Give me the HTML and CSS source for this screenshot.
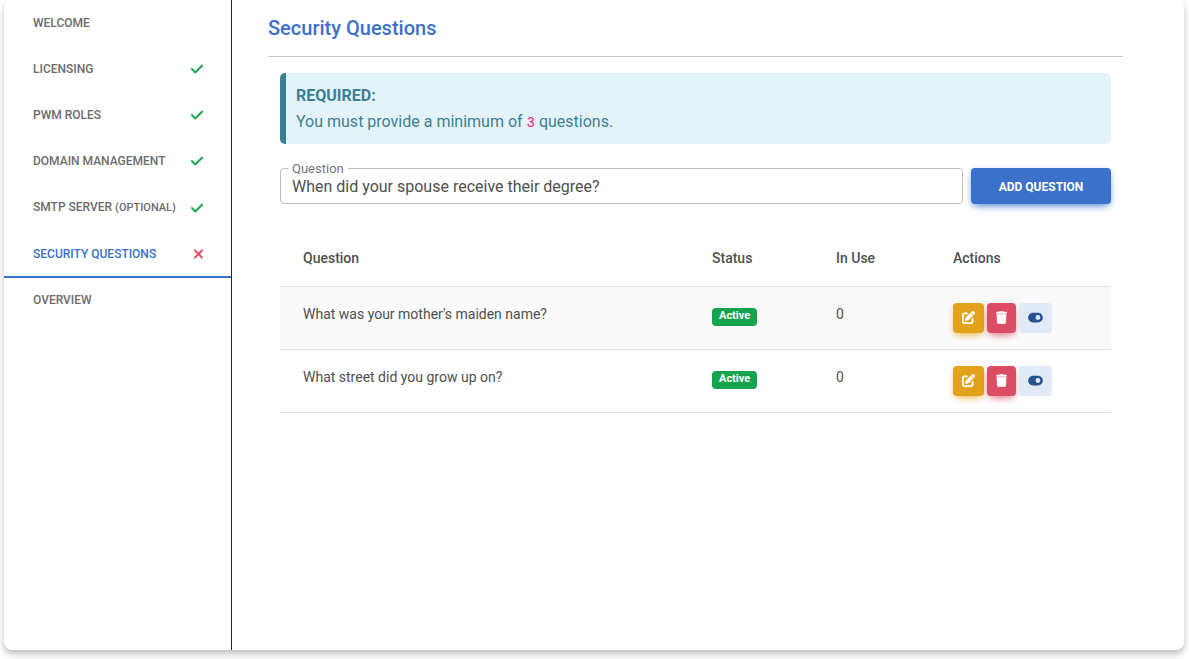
FILE: index.html
```html
<!DOCTYPE html>
<html lang="en">
  <head>
    <meta charset="utf-8">
    <meta name="viewport" content="width=device-width, initial-scale=1">
    <title>Security Questions</title>
    <link rel="stylesheet" href="styles.css">
  </head>
  <body>
    <svg width="0" height="0" class="sprite" aria-hidden="true">
      <symbol id="check" viewBox="0 0 448 512">
        <path d="M438.6 105.4c12.5 12.5 12.5 32.8 0 45.3l-256 256c-12.5 12.5-32.8 12.5-45.3 0l-128-128c-12.5-12.5-12.5-32.8 0-45.3s32.8-12.5 45.3 0L160 338.7 393.4 105.4c12.5-12.5 32.8-12.5 45.3 0z"/>
      </symbol>
      <symbol id="times" viewBox="0 0 320 512">
        <path d="M310.6 361.4c12.5 12.5 12.5 32.8 0 45.3s-32.8 12.5-45.3 0L160 301.3 54.6 406.6c-12.5 12.5-32.8 12.5-45.3 0s-12.5-32.8 0-45.3L114.7 256 9.4 150.6c-12.5-12.5-12.5-32.8 0-45.3s32.8-12.5 45.3 0L160 210.7 265.4 105.4c12.5-12.5 32.8-12.5 45.3 0s12.5 32.8 0 45.3L205.3 256z"/>
      </symbol>
      <symbol id="edit" viewBox="0 0 512 512">
        <path d="M471.6 21.7c-21.9-21.9-57.3-21.9-79.2 0L362.3 51.7l97.9 97.9 30.1-30.1c21.9-21.9 21.9-57.3 0-79.2L471.6 21.7zm-299.2 220c-6.1 6.1-10.8 13.6-13.5 21.9l-29.6 88.8c-2.9 8.6-.6 18.1 5.8 24.6s15.9 8.7 24.6 5.8l88.8-29.6c8.2-2.7 15.7-7.4 21.9-13.5L437.7 172.3 339.7 74.3 172.4 241.7zM96 64C43 64 0 107 0 160V416c0 53 43 96 96 96H352c53 0 96-43 96-96V320c0-17.7-14.3-32-32-32s-32 14.3-32 32v96c0 17.7-14.3 32-32 32H96c-17.7 0-32-14.3-32-32V160c0-17.7 14.3-32 32-32h96c17.7 0 32-14.3 32-32s-14.3-32-32-32H96z"/>
      </symbol>
      <symbol id="trash" viewBox="0 0 448 512">
        <path d="M135.2 17.7L128 32H32C14.3 32 0 46.3 0 64S14.3 96 32 96H416c17.7 0 32-14.3 32-32s-14.3-32-32-32H320l-7.2-14.3C307.4 6.8 296.3 0 284.2 0H163.8c-12.1 0-23.2 6.8-28.6 17.7zM416 128H32L53.2 467c1.6 25.3 22.6 45 47.9 45H346.9c25.3 0 46.3-19.7 47.9-45L416 128z"/>
      </symbol>
      <symbol id="toggle-on" viewBox="0 0 576 512">
        <path d="M192 64C86 64 0 150 0 256S86 448 192 448H384c106 0 192-86 192-192s-86-192-192-192H192zm192 96a96 96 0 1 1 0 192 96 96 0 1 1 0-192z"/>
      </symbol>
    </svg>

    <div class="card">
      <nav class="steps">
        <a class="step" href="#welcome">Welcome</a>
        <a class="step" href="#licensing">Licensing <svg class="icon-check"><use href="#check"/></svg></a>
        <a class="step" href="#roles">PWM Roles <svg class="icon-check"><use href="#check"/></svg></a>
        <a class="step" href="#domain">Domain Management <svg class="icon-check"><use href="#check"/></svg></a>
        <a class="step" href="#smtp"><span>SMTP Server <small>(Optional)</small></span> <svg class="icon-check"><use href="#check"/></svg></a>
        <a class="step active" href="#questions">Security Questions <svg class="icon-times"><use href="#times"/></svg></a>
        <a class="step" href="#overview">Overview</a>
      </nav>

      <main class="content">
        <h1>Security Questions</h1>
        <div class="panel">
          <div class="note">
            <strong>REQUIRED:</strong>
            <p>You must provide a minimum of <code>3</code> questions.</p>
          </div>

          <form class="add-form">
            <div class="field">
              <label for="question">Question</label>
              <input type="text" id="question" value="When did your spouse receive their degree?">
            </div>
            <button type="button" class="btn-add">Add Question</button>
          </form>

          <table>
            <colgroup>
              <col>
              <col class="col-status">
              <col class="col-use">
              <col class="col-actions">
            </colgroup>
            <thead>
              <tr>
                <th>Question</th>
                <th>Status</th>
                <th>In Use</th>
                <th>Actions</th>
              </tr>
            </thead>
            <tbody>
              <tr>
                <td>What was your mother's maiden name?</td>
                <td><span class="badge">Active</span></td>
                <td>0</td>
                <td>
                  <div class="actions">
                    <button type="button" class="btn btn-edit" aria-label="Edit"><svg class="icon-edit"><use href="#edit"/></svg></button>
                    <button type="button" class="btn btn-delete" aria-label="Delete"><svg class="icon-trash"><use href="#trash"/></svg></button>
                    <button type="button" class="btn btn-toggle" aria-label="Toggle"><svg class="icon-toggle"><use href="#toggle-on"/></svg></button>
                  </div>
                </td>
              </tr>
              <tr>
                <td>What street did you grow up on?</td>
                <td><span class="badge">Active</span></td>
                <td>0</td>
                <td>
                  <div class="actions">
                    <button type="button" class="btn btn-edit" aria-label="Edit"><svg class="icon-edit"><use href="#edit"/></svg></button>
                    <button type="button" class="btn btn-delete" aria-label="Delete"><svg class="icon-trash"><use href="#trash"/></svg></button>
                    <button type="button" class="btn btn-toggle" aria-label="Toggle"><svg class="icon-toggle"><use href="#toggle-on"/></svg></button>
                  </div>
                </td>
              </tr>
            </tbody>
          </table>
        </div>
      </main>
    </div>
  </body>
</html>
```
FILE: styles.css
```css
* {
  box-sizing: border-box;
}

body {
  background: #fff;
  color: #4f4f4f;
  display: flex;
  font-family: Roboto, sans-serif;
  font-size: 16px;
  line-height: 26px;
  margin: 0;
  min-height: 100vh;
  padding: 0 5px 9px 4px;
}

svg {
  display: block;
  fill: currentColor;
}

.sprite {
  position: absolute;
}

.card {
  border-radius: 8px;
  box-shadow: 0 4px 6px rgba(0, 0, 0, 0.25);
  display: flex;
  flex: 1;
}

/* Setup steps */

.steps {
  border-right: 1px solid #262626;
  flex: none;
  padding-top: 1px;
  width: 228px;
}

.step {
  align-items: center;
  border-bottom: 2px solid transparent;
  color: #6c6c6c;
  display: flex;
  font-size: 12px;
  font-weight: 500;
  justify-content: space-between;
  line-height: 18px;
  padding: 13px 28px 13px 29px;
  text-decoration: none;
  text-transform: uppercase;
}

.step small {
  font-size: 11px;
}

.step.active {
  border-color: #3b71ca;
  color: #3b71ca;
}

.icon-check,
.icon-times {
  height: 14px;
  stroke: currentColor;
  stroke-width: 16px;
}

.icon-check {
  color: #14a44d;
  width: 12px;
}

.icon-times {
  color: #dc4c64;
  width: 9px;
}

/* Content */

.content {
  flex: 1;
  padding: 15px 61px 0 36px;
}

h1 {
  border-bottom: 1px solid #cacaca;
  color: #3b71ca;
  font-size: 20px;
  font-weight: 500;
  line-height: 26px;
  margin: 0 0 16px;
  padding-bottom: 15px;
}

.panel {
  padding: 0 12px;
}

.note {
  background: #e4f3f8;
  border-left: 6px solid #3b7f94;
  border-radius: 5px;
  color: #3b7f94;
  margin-bottom: 24px;
  padding: 10px 10px 9px;
}

.note strong {
  display: block;
}

.note p {
  height: 26px;
  margin: 0;
}

.note code {
  color: #f0186c;
  font-family: "Liberation Mono", monospace;
  font-size: 14px;
}

.add-form {
  display: flex;
  gap: 8px;
  margin-bottom: 26px;
}

.field {
  flex: 1;
  position: relative;
}

.field label {
  background: #fff;
  color: #757575;
  font-size: 13px;
  left: 8px;
  line-height: 16px;
  padding: 0 4px;
  position: absolute;
  top: -7px;
}

.field input {
  background: #fff;
  border: 1px solid #bdbdbd;
  border-radius: 4px;
  color: #4f4f4f;
  display: block;
  font: inherit;
  height: 36px;
  padding: 0 11px;
  width: 100%;
}

.btn-add {
  background: #3b71ca;
  border: 0;
  border-radius: 4px;
  box-shadow: 0 4px 9px -4px #3b71ca, 0 2px 6px rgba(59, 113, 202, 0.3);
  color: #fff;
  font-family: inherit;
  font-size: 12px;
  font-weight: 700;
  padding: 2px 0 0;
  text-transform: uppercase;
  width: 140px;
}

/* Questions table */

table {
  border-collapse: collapse;
  font-size: 14px;
  line-height: 22px;
  table-layout: fixed;
  width: 100%;
}

.col-status {
  width: 124px;
}

.col-use {
  width: 117px;
}

.col-actions {
  width: 181px;
}

th,
td {
  border-bottom: 1px solid #e0e0e0;
  padding: 16px 23px;
  text-align: left;
  vertical-align: top;
}

th {
  font-weight: 500;
  padding: 17px 23px;
}

tbody tr:nth-child(odd) {
  background: #fafafa;
}

.badge {
  background: #14a44d;
  border-radius: 4px;
  color: #fff;
  display: block;
  font-size: 11px;
  font-weight: 700;
  line-height: 14px;
  margin-top: 5px;
  padding: 1px 7px 3px;
  width: fit-content;
}

.actions {
  display: flex;
  gap: 3px;
}

.btn {
  align-items: center;
  border: 0;
  border-radius: 4px;
  color: #fff;
  display: flex;
  height: 30px;
  padding: 0 9px 1px;
}

.btn-edit {
  background: #e4a11b;
  box-shadow: 0 4px 9px -4px #e4a11b, 0 2px 6px rgba(228, 161, 27, 0.2);
}

.btn-delete {
  background: #dc4c64;
  box-shadow: 0 4px 9px -4px #dc4c64, 0 2px 6px rgba(220, 76, 100, 0.2);
}

.btn-toggle {
  background: #e2eaf7;
  color: #285192;
}

.icon-edit {
  height: 13px;
  stroke: currentColor;
  stroke-width: 16px;
  width: 13px;
}

.icon-trash {
  height: 13px;
  stroke: currentColor;
  stroke-width: 16px;
  width: 11px;
}

.icon-toggle {
  height: 13px;
  width: 15px;
}
```
